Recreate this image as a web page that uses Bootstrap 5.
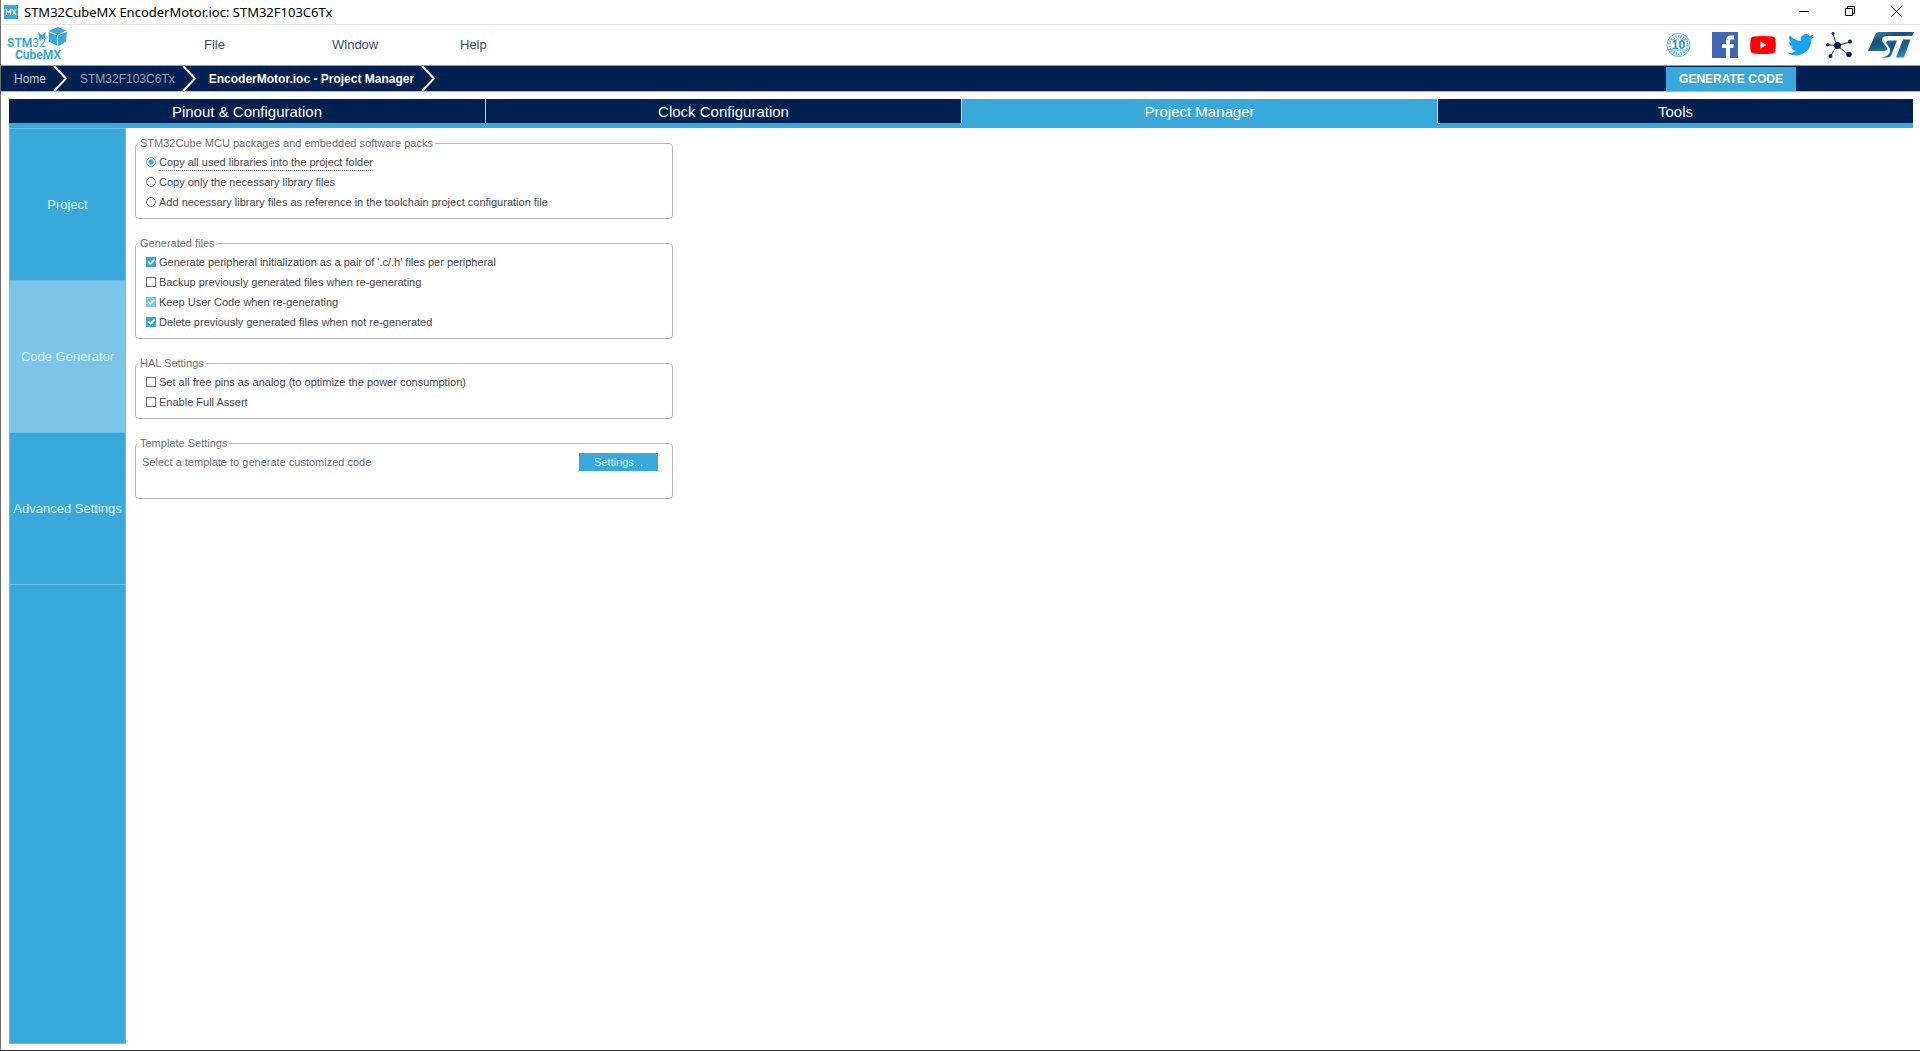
<!DOCTYPE html>
<html lang="en">
<head>
<meta charset="utf-8">
<meta name="viewport" content="width=device-width, initial-scale=1">
<title>STM32CubeMX EncoderMotor.ioc: STM32F103C6Tx</title>
<link href="https://cdn.jsdelivr.net/npm/bootstrap@5.3.0/dist/css/bootstrap.min.css" rel="stylesheet">
<style>
:root{--navy:#002052;--sky:#39a9dc;--sky-light:#7cc5e8}
body{font-family:"Liberation Sans",Arial,sans-serif;font-size:11px;line-height:14px;color:#464650}
a{text-decoration:none}
.app-window{min-height:100vh;border-left:1px solid #6e6e6e;border-bottom:1px solid #2a2a3a}
.title-strip{height:25px;border-bottom:1px solid #e5e5e5;color:#000;font-family:"Noto Sans","Open Sans",sans-serif;font-size:13px;padding:0 4px 1px 3px;gap:6px}
.win-btn{width:40px;height:24px;background:none;border:0;padding:0;display:flex;align-items:center;justify-content:center}
.menu-strip{height:41px;border-bottom:1px solid #8c9cb4;padding-right:6px}
.logo-link{width:203px;padding-left:5px}
.menu-strip .nav-link{width:128px;padding:0;font-size:13px;color:#3c4b78}
.social{gap:12px}
.crumb-strip{height:26px;background:var(--navy);border-bottom:1px solid #b3bccb;font-size:12px;padding-left:13px}
.crumb-strip a{color:#c2cad8}
.crumb-strip .crumb-dim{color:#95a1b8}
.crumb-strip .crumb-here{color:#fff;font-weight:bold}
.crumb-arrow{width:15px;height:25px;margin:0 12px 0 7px;fill:none;stroke:#fff;stroke-width:2}
.gen-btn{width:130px;height:24px;margin-right:124px;background:var(--sky);border:0;color:#fff;font-size:12px;font-weight:bold;padding:0}
.work-area{padding:7px 7px 6px 8px}
.main-tabs{border-bottom:5px solid var(--sky)}
.main-tabs .nav-link{height:24px;padding:1px 0 0;background:var(--navy);color:#fff;font-size:15px;line-height:24px;border-radius:0;border-left:1px solid #c8d0dc}
.main-tabs .nav-item:first-child .nav-link{border-left:0}
.main-tabs .nav-link.active{background:var(--sky)}
.side-tabs{width:117px;background:var(--sky);border:1px solid #6cc0e8}
.side-tabs .nav-link{height:152px;padding:0;border-radius:0;border-bottom:1px solid #6cc0e8;color:#d9f0fb;font-size:13px;white-space:nowrap;display:flex;align-items:center;justify-content:center}
.side-tabs .nav-link.active{background:var(--sky-light)}
.panel-col{width:538px;margin-left:9px;padding-top:8px;gap:17px}
.group-box{border:1px solid #b4b9be;border-radius:4px}
.group-box legend{float:none;width:auto;margin:0 0 0 2px;padding:0 2px;font-size:11px;line-height:14px;color:#6e6e78}
.opts{padding:2px 10px 6px}
.opt-row{height:20px;gap:3px}
.opt-row .form-check-input{width:10px;height:10px;margin:0;border:1px solid #6e6e6e;border-radius:0;flex:none;box-shadow:none}
.opt-row .form-check-input[type=radio]{border-radius:50%}
.opt-row .form-check-input:checked{border-color:var(--sky);background-color:var(--sky);background-size:12px 12px}
.opt-row .form-check-input[type=radio]:checked{background:radial-gradient(circle,var(--sky) 0 2px,#fff 3px)}
.opt-row .form-check-input:disabled{opacity:1;background-color:var(--sky-light);border-color:var(--sky-light)}
.opt-row .form-check-label{opacity:1!important;line-height:16px}
.focus-label{border-bottom:1px dotted #8c8c96}
.template-row{padding:3px 14px 27px 6px;color:#6e6e78}
.set-btn{width:79px;height:18px;background:var(--sky);border:0;color:#d9f0fb;padding:0}
</style>
<script src="https://cdn.jsdelivr.net/npm/bootstrap@5.3.0/dist/js/bootstrap.bundle.min.js"></script>
</head>
<body>
<div class="app-window d-flex flex-column bg-white">
  <header>
    <div class="title-strip d-flex align-items-center">
      <svg width="14" height="14" viewBox="0 0 14 14" aria-hidden="true"><rect width="14" height="14" fill="#39a9dc"/><path d="M2.500 10V5l2 2.500L6.500 5v5M8.500 4.500l3.500 5.500M12 4.500L8.500 10" fill="none" stroke="#fff" stroke-width="1.300"/></svg>
      <span class="me-auto">STM32CubeMX EncoderMotor.ioc: STM32F103C6Tx</span>
      <button class="win-btn" type="button" aria-label="Minimize"><svg width="11" height="11"><path d="M0 5.500h10" stroke="#000"/></svg></button>
      <button class="win-btn" type="button" aria-label="Restore"><svg width="11" height="11" fill="none" stroke="#000"><path d="M.5 2.500h7v7h-7zM2.500 2.500v-2h7v7h-2"/></svg></button>
      <button class="win-btn" type="button" aria-label="Close"><svg width="11" height="11"><path d="M.5.5l10 10M10.500.5l-10 10" stroke="#000"/></svg></button>
    </div>
    <nav class="menu-strip d-flex align-items-center">
      <a class="logo-link" href="#" aria-label="STM32CubeMX"><svg width="64" height="38" viewBox="0 0 64 38" fill="#39a9dc" font-family="'Liberation Sans Narrow',Roboto,sans-serif" font-size="12"><text x="1" y="21"><tspan font-weight="bold">STM</tspan>32</text><text x="9" y="33" font-weight="bold">CubeMX</text><path d="M51.500 1l9 3.500-9 4-9-3.500zM42.500 6l8.500 3.500v10.500l-8-4.500zM52 9.500l9-4-1 10-8 5zM32 6l4 3 4-3-1 4.500 1 2.500-4-1-3 2v-4z"/></svg></a>
      <div class="nav me-auto"><a class="nav-link" href="#">File</a><a class="nav-link" href="#">Window</a><a class="nav-link" href="#">Help</a></div>
      <div class="social d-flex align-items-center">
        <a href="#" aria-label="10 years" class="d-flex me-2"><svg width="26" height="26" viewBox="0 0 26 26" fill="none" stroke="#5bb3da"><circle cx="12.500" cy="13" r="11.500"/><circle cx="12.500" cy="13" r="8.700" stroke-width="3" stroke-dasharray="1.500 1" opacity=".8"/><path d="M5 8.500h15v9H5z" fill="#fff" stroke="none"/><path d="M2 8q10-2 21 0M2 17.500q11 2 21 0" stroke-width=".8"/><text x="12.500" y="17" font-size="12" font-weight="bold" text-anchor="middle" stroke="none" fill="#2b91c0">10</text></svg></a>
        <a href="#" aria-label="Facebook" class="d-flex"><svg width="26" height="26" viewBox="0 0 26 26"><path d="M0 0h26v26H0z" fill="#4267b2"/><path d="M14 26V16h-4v-4h4V9c0-4 2-5.500 5-5.500h3v4h-2c-1.600 0-2 .6-2 2V12h4l-.6 4H18v10z" fill="#fff"/></svg></a>
        <a href="#" aria-label="YouTube" class="d-flex"><svg width="26" height="18" viewBox="0 0 26 18"><path d="M4 .5Q13-.5 22 .5q3 .2 3.400 3 .8 5.500 0 11-.4 2.800-3.400 3-9 1-18 0-3-.2-3.400-3-.8-5.500 0-11Q1 .7 4 .5z" fill="red"/><path d="M10.500 5.500v7l6-3.500z" fill="#fff"/></svg></a>
        <a href="#" aria-label="Twitter" class="d-flex"><svg width="26" height="22" viewBox="0 0 24 20"><path d="M24 2.300a9.800 9.800 0 0 1-2.800.8A4.900 4.900 0 0 0 23.300.4a9.900 9.900 0 0 1-3.100 1.200 4.900 4.900 0 0 0-8.400 4.500A14 14 0 0 1 1.700.9a4.900 4.900 0 0 0 1.500 6.600A4.900 4.900 0 0 1 1 6.900a4.900 4.900 0 0 0 3.900 4.900 5 5 0 0 1-2.200.1 4.900 4.900 0 0 0 4.600 3.400A9.900 9.900 0 0 1 0 17.300 14 14 0 0 0 21.500 4.900 10 10 0 0 0 24 2.300z" fill="#1da1f2"/></svg></a>
        <a href="#" aria-label="Community" class="d-flex"><svg width="26" height="26" viewBox="0 0 26 26" fill="#002052" stroke="#002052"><path d="M11 13.500L7 2M11 13.500l-9.500-.7M11 13.500L24 10M11 13.500L4.500 24M11 13.500L23 23"/><g stroke="none"><circle cx="11.500" cy="13.500" r="3.500"/><circle cx="7" cy="1.500" r="1.500"/><circle cx="1.700" cy="12.700" r="1.700"/><circle cx="24" cy="9.500" r="2"/><circle cx="4.500" cy="24" r="2"/><circle cx="23" cy="22.500" r="2.700"/></g></svg></a>
        <a href="#" aria-label="ST" class="d-flex ms-1"><svg width="46" height="26" viewBox="0 0 46 26"><defs><linearGradient id="st" x1="0" x2=".8" y2="1"><stop stop-color="#3a8fb5"/><stop offset=".4" stop-color="#17507c"/><stop offset=".7" stop-color="#1a6c98"/><stop offset="1" stop-color="#2e9fc0"/></linearGradient></defs><path d="M11 0h35l-2 4H19c-5 0-6 3.500-4 6.500l3.500 4.500c1.500 2 .5 4-2 4H0L7 3c.8-2 2-3 4-3z" fill="url(#st)"/><path d="M22 8.500h7l-5.500 14c-.8 2-2 3-4 3H13c8-.5 11-6.500 8-10.500l-2-2.500c-1.500-2-.5-4 3-4zM35 7.500h7.500L36 25.500h-8z" fill="url(#st)"/></svg></a>
      </div>
    </nav>
    <nav class="crumb-strip d-flex align-items-center" aria-label="Breadcrumb">
      <a href="#">Home</a>
      <svg class="crumb-arrow" aria-hidden="true"><path d="M1 0l12 12.500L1 25"/></svg>
      <a href="#" class="crumb-dim">STM32F103C6Tx</a>
      <svg class="crumb-arrow" aria-hidden="true"><path d="M1 0l12 12.500L1 25"/></svg>
      <a href="#" class="crumb-here" aria-current="page">EncoderMotor.ioc - Project Manager</a>
      <svg class="crumb-arrow" aria-hidden="true"><path d="M1 0l12 12.500L1 25"/></svg>
      <button class="gen-btn ms-auto" type="button">GENERATE CODE</button>
    </nav>
  </header>
  <main class="work-area d-flex flex-column flex-grow-1">
    <ul class="main-tabs nav nav-justified">
      <li class="nav-item"><a class="nav-link" href="#">Pinout &amp; Configuration</a></li>
      <li class="nav-item"><a class="nav-link" href="#">Clock Configuration</a></li>
      <li class="nav-item"><a class="nav-link active" href="#" aria-current="page">Project Manager</a></li>
      <li class="nav-item"><a class="nav-link" href="#">Tools</a></li>
    </ul>
    <div class="d-flex flex-grow-1">
      <nav class="side-tabs nav flex-column flex-nowrap">
        <a class="nav-link" href="#">Project</a>
        <a class="nav-link active" href="#" aria-current="page">Code Generator</a>
        <a class="nav-link" href="#">Advanced Settings</a>
      </nav>
      <form class="panel-col d-flex flex-column">
        <fieldset class="group-box">
          <legend>STM32Cube MCU packages and embedded software packs</legend>
          <div class="opts">
            <div class="opt-row d-flex align-items-center"><input class="form-check-input" type="radio" name="lib" id="lib1" checked><label class="form-check-label focus-label" for="lib1">Copy all used libraries into the project folder</label></div>
            <div class="opt-row d-flex align-items-center"><input class="form-check-input" type="radio" name="lib" id="lib2"><label class="form-check-label" for="lib2">Copy only the necessary library files</label></div>
            <div class="opt-row d-flex align-items-center"><input class="form-check-input" type="radio" name="lib" id="lib3"><label class="form-check-label" for="lib3">Add necessary library files as reference in the toolchain project configuration file</label></div>
          </div>
        </fieldset>
        <fieldset class="group-box">
          <legend>Generated files</legend>
          <div class="opts">
            <div class="opt-row d-flex align-items-center"><input class="form-check-input" type="checkbox" id="gen1" checked><label class="form-check-label" for="gen1">Generate peripheral initialization as a pair of '.c/.h' files per peripheral</label></div>
            <div class="opt-row d-flex align-items-center"><input class="form-check-input" type="checkbox" id="gen2"><label class="form-check-label" for="gen2">Backup previously generated files when re-generating</label></div>
            <div class="opt-row d-flex align-items-center"><input class="form-check-input" type="checkbox" id="gen3" checked disabled><label class="form-check-label" for="gen3">Keep User Code when re-generating</label></div>
            <div class="opt-row d-flex align-items-center"><input class="form-check-input" type="checkbox" id="gen4" checked><label class="form-check-label" for="gen4">Delete previously generated files when not re-generated</label></div>
          </div>
        </fieldset>
        <fieldset class="group-box">
          <legend>HAL Settings</legend>
          <div class="opts">
            <div class="opt-row d-flex align-items-center"><input class="form-check-input" type="checkbox" id="hal1"><label class="form-check-label" for="hal1">Set all free pins as analog (to optimize the power consumption)</label></div>
            <div class="opt-row d-flex align-items-center"><input class="form-check-input" type="checkbox" id="hal2"><label class="form-check-label" for="hal2">Enable Full Assert</label></div>
          </div>
        </fieldset>
        <fieldset class="group-box">
          <legend>Template Settings</legend>
          <div class="template-row d-flex align-items-center justify-content-between"><span>Select a template to generate customized code</span><button class="set-btn" type="button">Settings...</button></div>
        </fieldset>
      </form>
    </div>
  </main>
</div>
</body>
</html>
